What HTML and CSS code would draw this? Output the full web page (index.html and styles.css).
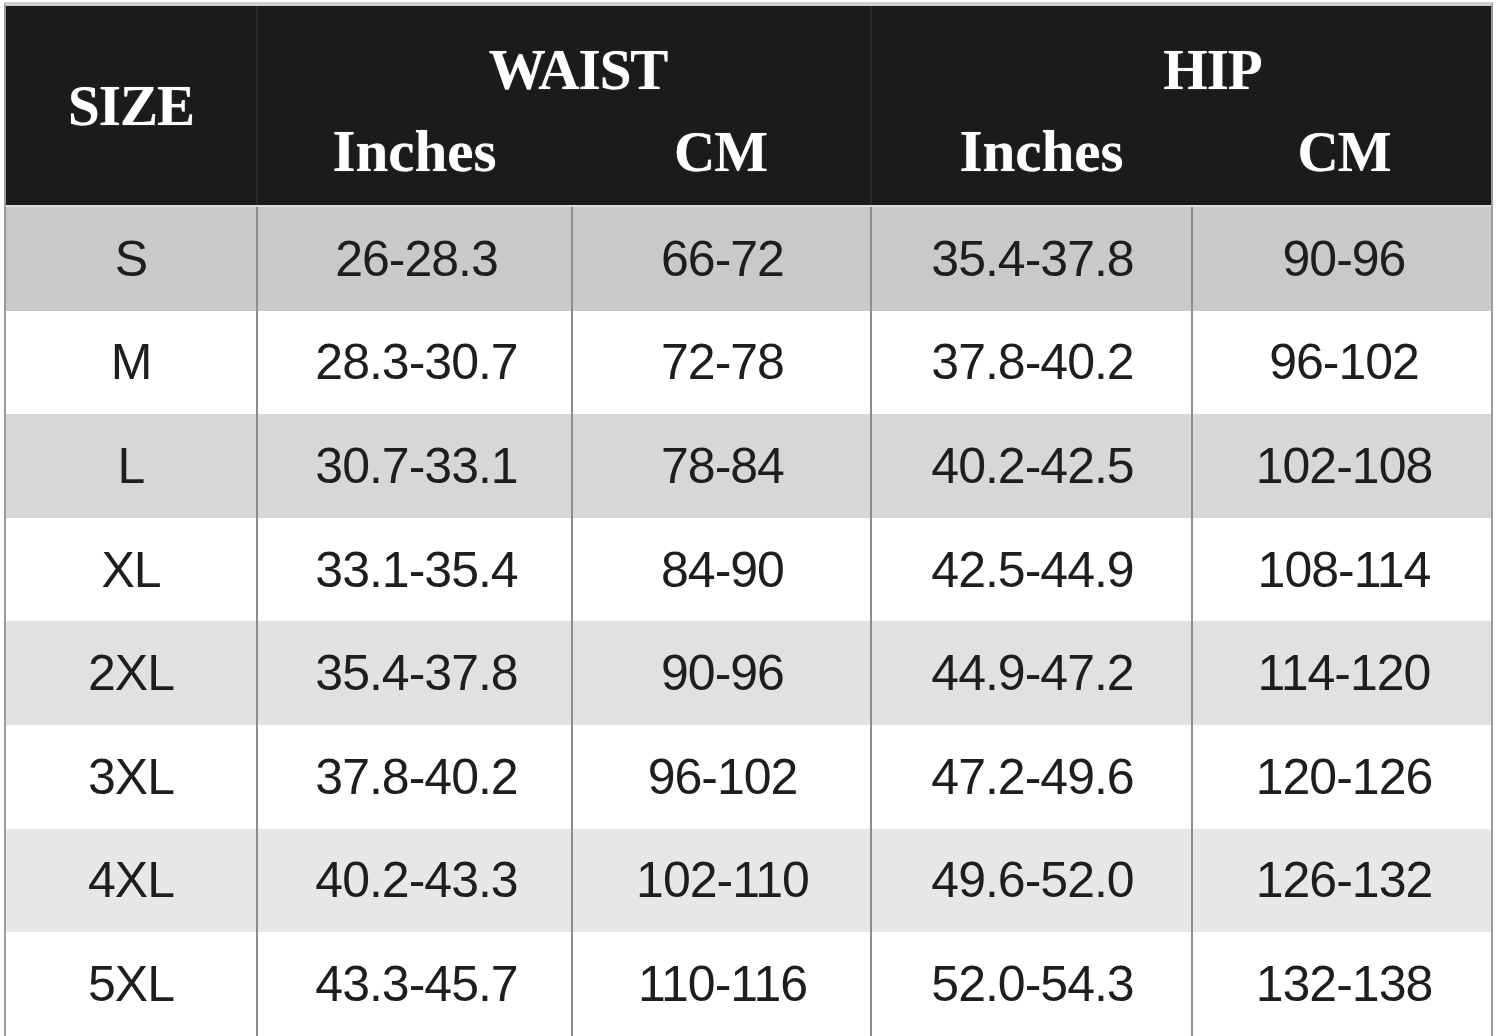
FILE: index.html
```html
<!DOCTYPE html>
<html lang="en">
<head>
<meta charset="utf-8">
<title>Size Chart</title>
<link rel="stylesheet" href="styles.css">
</head>
<body>
<div class="chart">
  <div class="head">
    <div class="h-size">SIZE</div>
    <div class="h-group h-waist">
      <div class="h-title t-waist">WAIST</div>
      <div class="h-sub">
        <div class="h-unit u-w-in">Inches</div>
        <div class="h-unit u-w-cm">CM</div>
      </div>
    </div>
    <div class="h-group h-hip">
      <div class="h-title t-hip">HIP</div>
      <div class="h-sub">
        <div class="h-unit u-h-in">Inches</div>
        <div class="h-unit u-h-cm">CM</div>
      </div>
    </div>
  </div>
  <div class="sep"></div>
  <div class="body">
    <div class="row r1"><div class="c c1">S</div><div class="c c2">26-28.3</div><div class="c c3">66-72</div><div class="c c4">35.4-37.8</div><div class="c c5">90-96</div></div>
    <div class="row r2"><div class="c c1">M</div><div class="c c2">28.3-30.7</div><div class="c c3">72-78</div><div class="c c4">37.8-40.2</div><div class="c c5">96-102</div></div>
    <div class="row r3"><div class="c c1">L</div><div class="c c2">30.7-33.1</div><div class="c c3">78-84</div><div class="c c4">40.2-42.5</div><div class="c c5">102-108</div></div>
    <div class="row r4"><div class="c c1">XL</div><div class="c c2">33.1-35.4</div><div class="c c3">84-90</div><div class="c c4">42.5-44.9</div><div class="c c5">108-114</div></div>
    <div class="row r5"><div class="c c1">2XL</div><div class="c c2">35.4-37.8</div><div class="c c3">90-96</div><div class="c c4">44.9-47.2</div><div class="c c5">114-120</div></div>
    <div class="row r6"><div class="c c1">3XL</div><div class="c c2">37.8-40.2</div><div class="c c3">96-102</div><div class="c c4">47.2-49.6</div><div class="c c5">120-126</div></div>
    <div class="row r7"><div class="c c1">4XL</div><div class="c c2">40.2-43.3</div><div class="c c3">102-110</div><div class="c c4">49.6-52.0</div><div class="c c5">126-132</div></div>
    <div class="row r8"><div class="c c1">5XL</div><div class="c c2">43.3-45.7</div><div class="c c3">110-116</div><div class="c c4">52.0-54.3</div><div class="c c5">132-138</div></div>
  </div>
</div>
</body>
</html>
```

FILE: styles.css
```css
html, body {
  margin: 0;
  padding: 0;
  background: #ffffff;
  overflow: hidden;
}

.chart {
  margin: 2px 0 0 4px;
  width: 1485px;
  border-top: 4px solid #cfcfcf;
  border-left: 2px solid #9c9c9c;
  border-right: 2px solid #9c9c9c;
}

.head {
  display: flex;
  height: 199px;
  background: #1b1b1b;
  color: #ffffff;
  font-family: "Liberation Serif", "Times New Roman", serif;
  font-weight: bold;
  font-size: 57px;
  text-shadow: 0 0 1px rgba(255, 255, 255, 0.6);
}

.h-size {
  width: 250px;
  display: flex;
  align-items: center;
  justify-content: center;
  letter-spacing: -1px;
}

.h-group {
  display: flex;
  flex-direction: column;
  border-left: 2px solid #2b2b2b;
}

.h-waist { width: 612px; }
.h-hip { width: 619px; }

.h-title {
  padding-top: 32px;
  line-height: 64px;
  height: 64px;
  text-align: center;
  letter-spacing: -1px;
}

.t-waist { padding-left: 28px; }
.t-hip { padding-left: 62px; }

.h-sub {
  flex: 1;
  display: flex;
}

.h-unit {
  display: flex;
  align-items: center;
  justify-content: center;
  padding-bottom: 4px;
  letter-spacing: -1px;
  box-sizing: border-box;
}

.u-w-in, .u-h-in {
  font-size: 59px;
  letter-spacing: 0;
}

.u-w-in { width: 313px; }
.u-w-cm { width: 299px; }
.u-h-in { width: 319px; padding-left: 20px; }
.u-h-cm { width: 300px; padding-left: 6px; }

.sep {
  height: 2px;
  background: #dedede;
}

.body {
  font-family: "Liberation Sans", Arial, sans-serif;
  font-size: 50px;
  color: #1e1e1e;
  letter-spacing: -1px;
}

.row {
  display: grid;
  grid-template-columns: 250px 315px 299px 321px 300px;
  height: 103.6px;
}

.r1 { background: #c9c9c9; }
.r3 { background: #d7d7d7; }
.r5 { background: #e1e1e1; }
.r7 { background: #e7e7e7; }
.r2, .r4, .r6, .r8 { background: #ffffff; }

.c {
  display: flex;
  align-items: center;
  justify-content: center;
  box-sizing: border-box;
}

.c2, .c3, .c4, .c5 {
  border-left: 2px solid #8c8c8c;
}

.c2 { padding-left: 4px; }
.c3 { padding-left: 2px; }
.c4 { padding-left: 2px; }
.c5 { padding-left: 4px; }
```
